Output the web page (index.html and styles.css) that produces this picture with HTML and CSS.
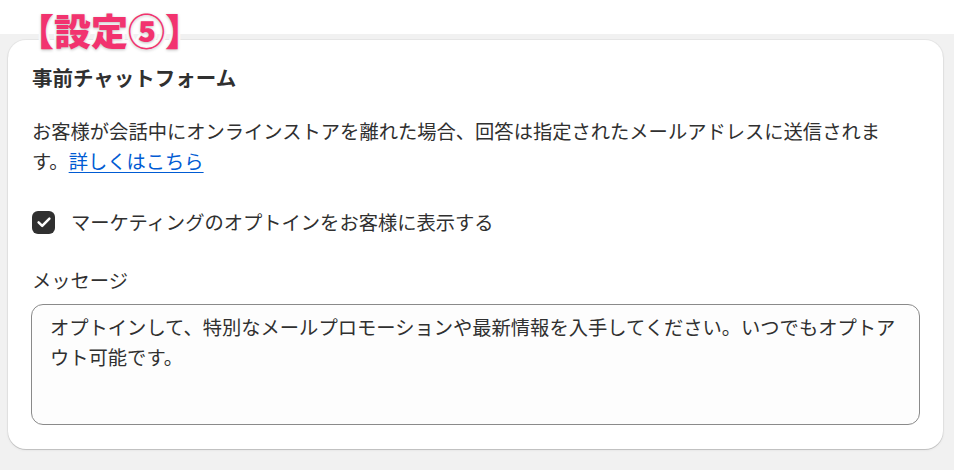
FILE: index.html
```html
<!DOCTYPE html>
<html lang="ja">
<head>
    <meta charset="UTF-8">
    <meta name="viewport" content="width=device-width, initial-scale=1.0">
    <title>事前チャットフォーム</title>
    <link rel="stylesheet" href="styles.css">
</head>
<body>
    <div class="topbar"></div>

    <div class="page">
        <div class="card">
            <h2 class="card-title">事前チャットフォーム</h2>
            <p class="desc">お客様が会話中にオンラインストアを離れた場合、回答は指定されたメールアドレスに送信されます。<a href="#" class="link">詳しくはこちら</a></p>

            <label class="check-row">
                <span class="checkbox">
                    <svg viewBox="0 0 20 20" width="20" height="20">
                        <path d="M4.6 10.4l3.6 3.5L15.4 6.6" fill="none" stroke="#fff" stroke-width="2.5" stroke-linecap="round" stroke-linejoin="round"/>
                    </svg>
                </span>
                <span class="check-label">マーケティングのオプトインをお客様に表示する</span>
            </label>

            <div class="field">
                <div class="field-label">メッセージ</div>
                <textarea class="textarea" rows="3">オプトインして、特別なメールプロモーションや最新情報を入手してください。いつでもオプトアウト可能です。</textarea>
            </div>
        </div>
    </div>

    <div class="note">【設定⑤】</div>
</body>
</html>
```

FILE: styles.css
```css
* {
    margin: 0;
    padding: 0;
    box-sizing: border-box;
}

body {
    font-family: "Noto Sans CJK JP", "Noto Sans", sans-serif;
    color: #303030;
    background: #f1f1f1;
    height: 470px;
    overflow: hidden;
}

.topbar {
    height: 34px;
    background: #fff;
}

.page {
    padding: 6px 11px 0 8px;
}

.card {
    background: #fff;
    border-radius: 18px;
    padding: 22px 24px 24px;
    box-shadow: 0 1px 0 rgba(0,0,0,0.12), 0 0 0 1px rgba(0,0,0,0.04), 0 1px 3px rgba(0,0,0,0.08);
}

.card-title {
    font-size: 20.5px;
    font-weight: 700;
    line-height: 30px;
}

.desc {
    margin-top: 24px;
    font-size: 19.3px;
    line-height: 30px;
    padding-right: 14px;
}

.link {
    color: #005bd3;
    text-decoration: underline;
    text-underline-offset: 3px;
}

.check-row {
    margin-top: 31px;
    display: flex;
    align-items: center;
    gap: 16px;
    font-size: 19.3px;
    line-height: 30px;
}

.checkbox {
    width: 23px;
    height: 23px;
    border-radius: 6px;
    background: #303030;
    display: flex;
    align-items: center;
    justify-content: center;
}

.field {
    margin-top: 28px;
}

.field-label {
    font-size: 19.3px;
    line-height: 30px;
    margin-bottom: 9px;
}

.textarea {
    display: block;
    width: calc(100% + 2px);
    margin-left: -1px;
    height: 121px;
    padding: 7px 12px 7px 18px;
    border: 1px solid #8a8a8a;
    border-radius: 12px;
    background: #fdfdfd;
    font-family: "Noto Sans CJK JP", "Noto Sans", sans-serif;
    font-size: 19.3px;
    line-height: 30px;
    color: #303030;
    resize: none;
    outline: none;
}

.note {
    position: absolute;
    left: 17px;
    top: 7px;
    font-size: 37px;
    line-height: 46px;
    font-weight: 900;
    color: #f2336f;
    -webkit-text-stroke: 5px #fff;
    paint-order: stroke fill;
    text-shadow: 0 1px 3px rgba(0,0,0,0.25);
}
```
